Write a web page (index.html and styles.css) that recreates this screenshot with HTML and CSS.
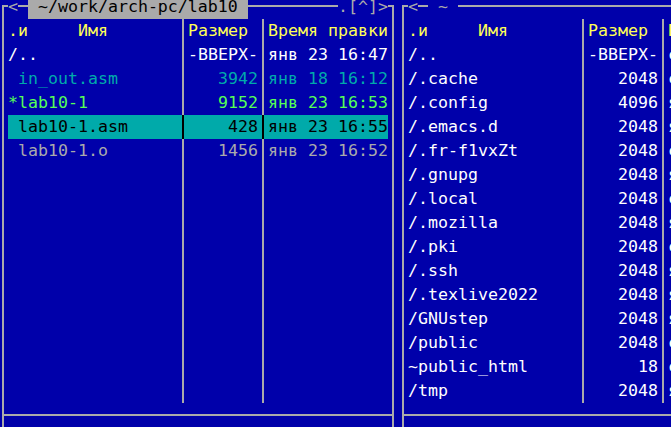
FILE: index.html
```html
<!DOCTYPE html>
<html lang="ru">
<head>
<meta charset="utf-8">
<title>mc</title>
<link rel="stylesheet" href="styles.css">
</head>
<body>
<div class="screen">
  <section class="panel">
    <div class="top">
      <i class="c-tl"></i><span class="g">&lt;</span><i class="h w1"></i><span class="path"> ~/work/arch-pc/lab10 </span><i class="h fill"></i><span class="g">.[^]&gt;</span><i class="c-tr"></i>
    </div>
    <div class="row head"><i class="v"></i><span class="name">.и     Имя</span><i class="v"></i><span class="hsize">Размер</span><i class="v"></i><span class="time">Время правки</span><i class="v"></i></div>
    <div class="row wh"><i class="v"></i><span class="name">/..</span><i class="v"></i><span class="size">-ВВЕРХ-</span><i class="v"></i><span class="time">янв 23 16:47</span><i class="v"></i></div>
    <div class="row cy"><i class="v"></i><span class="name"> in_out.asm</span><i class="v"></i><span class="size">3942</span><i class="v"></i><span class="time">янв 18 16:12</span><i class="v"></i></div>
    <div class="row gr"><i class="v"></i><span class="name">*lab10-1</span><i class="v"></i><span class="size">9152</span><i class="v"></i><span class="time">янв 23 16:53</span><i class="v"></i></div>
    <div class="row sel"><i class="v"></i><span class="name"> lab10-1.asm</span><i class="v"></i><span class="size">428</span><i class="v"></i><span class="time">янв 23 16:55</span><i class="v"></i></div>
    <div class="row gy"><i class="v"></i><span class="name"> lab10-1.o</span><i class="v"></i><span class="size">1456</span><i class="v"></i><span class="time">янв 23 16:52</span><i class="v"></i></div>
    <div class="row"><i class="v"></i><span class="name"></span><i class="v"></i><span class="size"></span><i class="v"></i><span class="time"></span><i class="v"></i></div>
    <div class="row"><i class="v"></i><span class="name"></span><i class="v"></i><span class="size"></span><i class="v"></i><span class="time"></span><i class="v"></i></div>
    <div class="row"><i class="v"></i><span class="name"></span><i class="v"></i><span class="size"></span><i class="v"></i><span class="time"></span><i class="v"></i></div>
    <div class="row"><i class="v"></i><span class="name"></span><i class="v"></i><span class="size"></span><i class="v"></i><span class="time"></span><i class="v"></i></div>
    <div class="row"><i class="v"></i><span class="name"></span><i class="v"></i><span class="size"></span><i class="v"></i><span class="time"></span><i class="v"></i></div>
    <div class="row"><i class="v"></i><span class="name"></span><i class="v"></i><span class="size"></span><i class="v"></i><span class="time"></span><i class="v"></i></div>
    <div class="row"><i class="v"></i><span class="name"></span><i class="v"></i><span class="size"></span><i class="v"></i><span class="time"></span><i class="v"></i></div>
    <div class="row"><i class="v"></i><span class="name"></span><i class="v"></i><span class="size"></span><i class="v"></i><span class="time"></span><i class="v"></i></div>
    <div class="row"><i class="v"></i><span class="name"></span><i class="v"></i><span class="size"></span><i class="v"></i><span class="time"></span><i class="v"></i></div>
    <div class="row"><i class="v"></i><span class="name"></span><i class="v"></i><span class="size"></span><i class="v"></i><span class="time"></span><i class="v"></i></div>
    <div class="bottom"><i class="t-l"></i><i class="h2 fill"></i><i class="t-r"></i></div>
  </section>

  <section class="panel">
    <div class="top">
      <i class="c-tl"></i><span class="g">&lt;</span><i class="h w1"></i><span class="g w3"> ~ </span><i class="h fill"></i><span class="g">.[^]&gt;</span><i class="c-tr"></i>
    </div>
    <div class="row head"><i class="v"></i><span class="name">.и     Имя</span><i class="v"></i><span class="hsize">Размер</span><i class="v"></i><span class="time">Время правки</span><i class="v"></i></div>
    <div class="row wh"><i class="v"></i><span class="name">/..</span><i class="v"></i><span class="size">-ВВЕРХ-</span><i class="v"></i><span class="time">сен 12 10:14</span><i class="v"></i></div>
    <div class="row wh"><i class="v"></i><span class="name">/.cache</span><i class="v"></i><span class="size">2048</span><i class="v"></i><span class="time">сен 14 09:20</span><i class="v"></i></div>
    <div class="row wh"><i class="v"></i><span class="name">/.config</span><i class="v"></i><span class="size">4096</span><i class="v"></i><span class="time">янв 11 12:03</span><i class="v"></i></div>
    <div class="row wh"><i class="v"></i><span class="name">/.emacs.d</span><i class="v"></i><span class="size">2048</span><i class="v"></i><span class="time">янв 10 18:41</span><i class="v"></i></div>
    <div class="row wh"><i class="v"></i><span class="name">/.fr-f1vxZt</span><i class="v"></i><span class="size">2048</span><i class="v"></i><span class="time">сен 29 11:07</span><i class="v"></i></div>
    <div class="row wh"><i class="v"></i><span class="name">/.gnupg</span><i class="v"></i><span class="size">2048</span><i class="v"></i><span class="time">янв 12 15:30</span><i class="v"></i></div>
    <div class="row wh"><i class="v"></i><span class="name">/.local</span><i class="v"></i><span class="size">2048</span><i class="v"></i><span class="time">сен 12 10:22</span><i class="v"></i></div>
    <div class="row wh"><i class="v"></i><span class="name">/.mozilla</span><i class="v"></i><span class="size">2048</span><i class="v"></i><span class="time">янв 13 20:16</span><i class="v"></i></div>
    <div class="row wh"><i class="v"></i><span class="name">/.pki</span><i class="v"></i><span class="size">2048</span><i class="v"></i><span class="time">сен 12 10:25</span><i class="v"></i></div>
    <div class="row wh"><i class="v"></i><span class="name">/.ssh</span><i class="v"></i><span class="size">2048</span><i class="v"></i><span class="time">янв 09 14:52</span><i class="v"></i></div>
    <div class="row wh"><i class="v"></i><span class="name">/.texlive2022</span><i class="v"></i><span class="size">2048</span><i class="v"></i><span class="time">янв 15 17:38</span><i class="v"></i></div>
    <div class="row wh"><i class="v"></i><span class="name">/GNUstep</span><i class="v"></i><span class="size">2048</span><i class="v"></i><span class="time">янв 10 19:02</span><i class="v"></i></div>
    <div class="row wh"><i class="v"></i><span class="name">/public</span><i class="v"></i><span class="size">2048</span><i class="v"></i><span class="time">сен 12 10:14</span><i class="v"></i></div>
    <div class="row wh"><i class="v"></i><span class="name">~public_html</span><i class="v"></i><span class="size">18</span><i class="v"></i><span class="time">сен 12 10:14</span><i class="v"></i></div>
    <div class="row wh"><i class="v"></i><span class="name">/tmp</span><i class="v"></i><span class="size">2048</span><i class="v"></i><span class="time">янв 23 16:40</span><i class="v"></i></div>
    <div class="bottom"><i class="t-l"></i><i class="h2 fill"></i><i class="t-r"></i></div>
  </section>
</div>
</body>
</html>
```
FILE: styles.css
```css
html, body {
  margin: 0;
  padding: 0;
  background: #0000aa;
  overflow: hidden;
}

.screen {
  display: flex;
  width: 800px;
  margin: -5px 0 0 -2px;
  font-family: "DejaVu Sans Mono", "Liberation Mono", monospace;
  font-size: 16.6px;
  line-height: 24px;
  color: #aaaaaa;
}

.panel {
  width: 400px;
  flex: none;
  display: flex;
  flex-direction: column;
}

.top, .bottom {
  display: flex;
  height: 24px;
}

.top > *, .bottom > * {
  display: block;
  height: 24px;
  flex: none;
  white-space: pre;
}

.g { width: auto; color: #aaaaaa; }
.w1 { width: 10px; }
.w3 { width: 30px; }
.fill { flex: 1 1 auto !important; }

.path {
  background: #aaaaaa;
  color: #000000;
}

.c-tl, .c-tr, .t-l, .t-r { width: 10px; }

.h {
  background: linear-gradient(#aaaaaa, #aaaaaa) 0 10px / 100% 2px no-repeat;
}
.h2 {
  background: linear-gradient(#aaaaaa, #aaaaaa) 0 11px / 100% 2px no-repeat;
}

.c-tl {
  background:
    linear-gradient(#aaaaaa, #aaaaaa) 4px 10px / 2px 14px no-repeat,
    linear-gradient(#aaaaaa, #aaaaaa) 4px 10px / 6px 2px no-repeat;
}
.c-tr {
  background:
    linear-gradient(#aaaaaa, #aaaaaa) 4px 10px / 2px 14px no-repeat,
    linear-gradient(#aaaaaa, #aaaaaa) 0 10px / 6px 2px no-repeat;
}
.t-l {
  background:
    linear-gradient(#aaaaaa, #aaaaaa) 4px 0 / 2px 100% no-repeat,
    linear-gradient(#aaaaaa, #aaaaaa) 4px 11px / 6px 2px no-repeat;
}
.t-r {
  background:
    linear-gradient(#aaaaaa, #aaaaaa) 4px 0 / 2px 100% no-repeat,
    linear-gradient(#aaaaaa, #aaaaaa) 0 11px / 6px 2px no-repeat;
}

.row {
  display: grid;
  grid-template-columns: 10px 170px 10px 70px 10px 120px 10px;
  height: 24px;
}

.row > * {
  display: block;
  height: 24px;
  white-space: pre;
  overflow: hidden;
}

.v {
  background: linear-gradient(#aaaaaa, #aaaaaa) 4px 0 / 2px 100% no-repeat;
}

.size { text-align: right; }

.head { color: #ffff55; }
.wh { color: #ffffff; }
.cy { color: #00aaaa; }
.gr { color: #55ff55; }
.gy { color: #aaaaaa; }

.sel { color: #000000; }
.sel .name, .sel .size, .sel .time { background-color: #00aaaa; }
.sel .v:nth-child(3), .sel .v:nth-child(5) {
  background: linear-gradient(#000000, #000000) 4px 0 / 2px 100% no-repeat, #00aaaa;
}
```
